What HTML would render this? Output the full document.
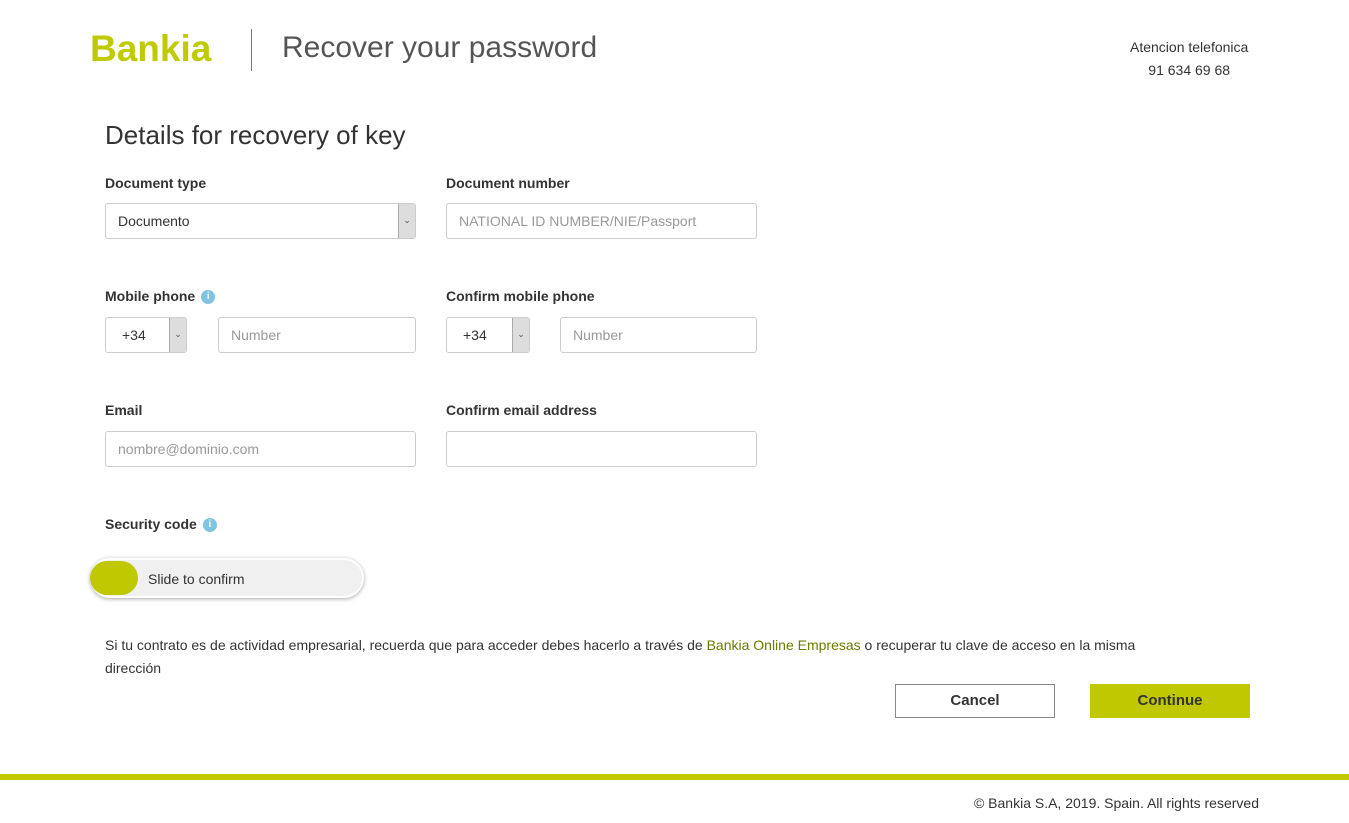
<!DOCTYPE html>
<html><head><meta charset="utf-8"><style>
*{box-sizing:border-box;margin:0;padding:0}
body{width:1349px;height:823px;background:#fff;font-family:"Liberation Sans",sans-serif;color:#222;position:relative;overflow:hidden}
.a{position:absolute}
.lbl{font-size:14px;font-weight:bold;color:#333}
.inp{position:absolute;border:1px solid #ccc;border-radius:3px;height:36px;font-size:14px;color:#999;padding:9px 12px;background:#fff}
.sel{color:#333}
.arr{position:absolute;right:0;top:0;width:17px;height:34px;background:#ddd;border-left:1px solid #aaa;font-size:9px;color:#555;text-align:center;line-height:32px}
.info{display:inline-block;width:14px;height:14px;border-radius:50%;background:#7fc4e0;color:#fff;font-size:10px;font-weight:bold;text-align:center;line-height:14px;vertical-align:2px;margin-left:6px}
.btn{position:absolute;width:160px;height:34px;font-size:15px;font-weight:bold;text-align:center;line-height:34px}
</style></head><body>
<div class="a" style="left:90px;top:28px;font-size:37px;color:#bfcb00;font-weight:bold;letter-spacing:0px">Bankia</div>
<div class="a" style="left:251px;top:29px;width:1px;height:42px;background:#777"></div>
<div class="a" style="left:282px;top:31px;font-size:30px;color:#555">Recover your password</div>
<div class="a" style="left:1130px;top:36px;font-size:14px;color:#333;text-align:center;line-height:23px">Atencion telefonica<br>91 634 69 68</div>
<div class="a" style="left:105px;top:120px;font-size:26px;color:#333">Details for recovery of key</div>

<div class="a lbl" style="left:105px;top:175px">Document type</div>
<div class="inp sel" style="left:105px;top:203px;width:311px">Documento<div class="arr">⌄</div></div>
<div class="a lbl" style="left:446px;top:175px">Document number</div>
<div class="inp" style="left:446px;top:203px;width:311px">NATIONAL ID NUMBER/NIE/Passport</div>

<div class="a lbl" style="left:105px;top:288px">Mobile phone<span class="info">i</span></div>
<div class="inp sel" style="left:105px;top:317px;width:82px;padding-left:16px">+34<div class="arr">⌄</div></div>
<div class="inp" style="left:218px;top:317px;width:198px">Number</div>
<div class="a lbl" style="left:446px;top:288px">Confirm mobile phone</div>
<div class="inp sel" style="left:446px;top:317px;width:84px;padding-left:16px">+34<div class="arr">⌄</div></div>
<div class="inp" style="left:560px;top:317px;width:197px">Number</div>

<div class="a lbl" style="left:105px;top:402px">Email</div>
<div class="inp" style="left:105px;top:431px;width:311px">nombre@dominio.com</div>
<div class="a lbl" style="left:446px;top:402px">Confirm email address</div>
<div class="inp" style="left:446px;top:431px;width:311px"></div>

<div class="a lbl" style="left:105px;top:516px">Security code<span class="info">i</span></div>
<div class="a" style="left:90px;top:558px;width:274px;height:40px;border-radius:20px;background:#f0f0f0;border:2px solid #fff;box-shadow:0 1px 4px rgba(0,0,0,.35)"></div>
<div class="a" style="left:90px;top:561px;width:48px;height:34px;border-radius:17px;background:#bfc800"></div>
<div class="a" style="left:148px;top:571px;font-size:14px;color:#333">Slide to confirm</div>

<div class="a" style="left:105px;top:634px;width:1120px;font-size:14px;color:#333;line-height:23px">Si tu contrato es de actividad empresarial, recuerda que para acceder debes hacerlo a través de <span style="color:#6d7a00">Bankia Online Empresas</span> o recuperar tu clave de acceso en la misma<br>dirección</div>
<div class="btn" style="left:895px;top:684px;border:1px solid #888;color:#333;background:#fff;line-height:32px">Cancel</div>
<div class="btn" style="left:1090px;top:684px;background:#bfc800;color:#333">Continue</div>

<div class="a" style="left:0;top:774px;width:1349px;height:6px;background:#bfc800"></div>
<div class="a" style="right:90px;top:795px;font-size:14px;color:#333">© Bankia S.A, 2019. Spain. All rights reserved</div>
</body></html>
